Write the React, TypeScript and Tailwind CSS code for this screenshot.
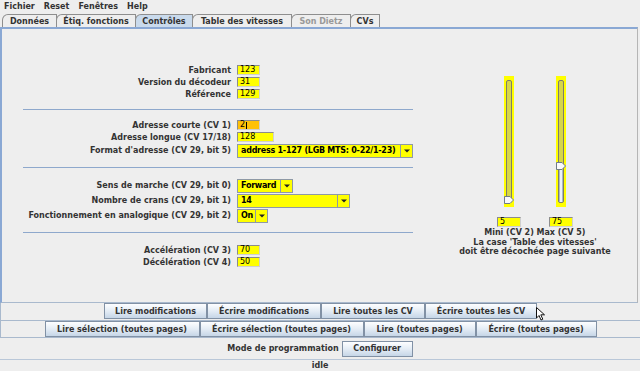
import React from "react";

const menus = ["Fichier", "Reset", "Fenêtres", "Help"];

const tabs = [
  { label: "Données", w: "w-[55px]" },
  { label: "Étiq. fonctions", w: "w-[80px]" },
  { label: "Contrôles", w: "w-[58px]", active: true },
  { label: "Table des vitesses", w: "w-[100px]" },
  { label: "Son Dietz", w: "w-[60px]", disabled: true },
  { label: "CVs", w: "w-[30px]" },
];

const Field = ({ value, w, orange }: { value: string; w: string; orange?: boolean }) => (
  <div
    className={`${w} h-[10px] ${orange ? "bg-[#ffc107]" : "bg-[#ffff00]"} border border-t-[#8c8c8c] border-l-[#8c8c8c] border-r-[#cfcfcf] border-b-[#cfcfcf] pl-[2px] font-normal text-black text-[8px] leading-[8px] flex items-center`}
  >
    {value}
    {orange && <span className="w-px h-[7px] bg-black ml-px" />}
  </div>
);

const Combo = ({ value, w }: { value: string; w: string }) => (
  <div className={`${w} h-[14px] bg-[#ffff00] border border-[#8e99a6] flex text-black`}>
    <div className="flex-1 flex items-center pl-[3px] whitespace-nowrap tracking-[-0.25px]">{value}</div>
    <div className="w-[12px] border-l border-[#8e99a6] flex items-center justify-center">
      <svg width="6" height="4" viewBox="0 0 6 4">
        <path d="M0 0.5h6L3 3.5z" fill="#222" />
      </svg>
    </div>
  </div>
);

const Row = ({ label, h, children }: { label: string; h: string; children: React.ReactNode }) => (
  <div className={`flex items-center ${h}`}>
    <span className="w-[208px] text-right whitespace-nowrap">{label}</span>
    <div className="ml-[6px]">{children}</div>
  </div>
);

const Sep = () => <div className="w-[390px] border-t border-[#8ea8cc]" />;

const Slider = ({ thumb, fill }: { thumb: string; fill?: string }) => (
  <div className="relative w-[10px] h-[131px] bg-[#ffff00]">
    <div className="absolute left-[2px] top-[4px] bottom-[4px] w-[6px] rounded-[2px] border border-[#7d7d6a] bg-[#d6d64a]" />
    {fill && <div className={`absolute left-[3px] w-[4px] ${fill} bg-[#eef3f9] border-x border-[#aab8c8]`} />}
    <svg className={`absolute left-0 ${thumb}`} width="10" height="8" viewBox="0 0 10 8">
      <path d="M0.5 0.5H6L9.5 4L6 7.5H0.5Z" fill="#fafafa" stroke="#6f7b88" />
    </svg>
  </div>
);

const Btn = ({ label, w }: { label: string; w: string }) => (
  <div
    className={`${w} h-[16px] border border-[#8191a5] bg-linear-to-b from-[#fdfeff] via-[#e4ecf5] to-[#c6d6e7] flex items-center justify-center whitespace-nowrap`}
  >
    {label}
  </div>
);

export default function App() {
  return (
    <div className="relative w-[640px] h-[371px] overflow-hidden bg-[#eeeeee] flex flex-col font-['DejaVu_Sans',sans-serif] text-[8px] leading-[9px] font-bold text-[#333333]">
      {/* menu bar */}
      <div className="h-[13px] flex items-center pl-[4px] gap-[9px]">
        {menus.map((m) => (
          <span key={m}>{m}</span>
        ))}
      </div>

      {/* tabs */}
      <div className="h-[14px] flex items-end pl-[2px]">
        {tabs.map((t) => (
          <div
            key={t.label}
            className={`${t.w} h-[13px] border-t border-l border-r border-[#8e8e8e] rounded-tl-[6px] -mr-px flex items-center justify-center whitespace-nowrap ${
              t.active ? "bg-[#c9daec]" : "bg-[#eeeeee]"
            } ${t.disabled ? "text-[#999999]" : ""}`}
          >
            {t.label}
          </div>
        ))}
      </div>

      {/* content panel */}
      <div className="w-[638px] h-[276px] border-t-2 border-l-2 border-[#8aa8d4] border-r border-b border-r-[#b5b5b5] border-b-[#a9b9cd] flex">
        <div className="w-[411px] pl-[21px] flex flex-col">
          <div className="mt-[35px]">
            <Row label="Fabricant" h="h-[12px]">
              <Field value="123" w="w-[23px]" />
            </Row>
            <Row label="Version du décodeur" h="h-[12px]">
              <Field value="31" w="w-[23px]" />
            </Row>
            <Row label="Référence" h="h-[12px]">
              <Field value="129" w="w-[23px]" />
            </Row>
          </div>
          <div className="mt-[9px]">
            <Sep />
          </div>
          <div className="mt-[9px]">
            <Row label="Adresse courte (CV 1)" h="h-[12px]">
              <Field value="2" w="w-[23px]" orange />
            </Row>
            <Row label="Adresse longue (CV 17/18)" h="h-[12px]">
              <Field value="128" w="w-[37px]" />
            </Row>
            <Row label="Format d'adresse (CV 29, bit 5)" h="h-[15px]">
              <Combo value="address 1-127 (LGB MTS: 0-22/1-23)" w="w-[176px]" />
            </Row>
          </div>
          <div className="mt-[9px]">
            <Sep />
          </div>
          <div className="mt-[10px]">
            <Row label="Sens de marche (CV 29, bit 0)" h="h-[15px]">
              <Combo value="Forward" w="w-[56px]" />
            </Row>
            <Row label="Nombre de crans (CV 29, bit 1)" h="h-[15px]">
              <Combo value="14" w="w-[113px]" />
            </Row>
            <Row label="Fonctionnement en analogique (CV 29, bit 2)" h="h-[15px]">
              <Combo value="On" w="w-[31px]" />
            </Row>
          </div>
          <div className="mt-[9px]">
            <Sep />
          </div>
          <div className="mt-[11px]">
            <Row label="Accélération (CV 3)" h="h-[12px]">
              <Field value="70" w="w-[23px]" />
            </Row>
            <Row label="Décélération (CV 4)" h="h-[12px]">
              <Field value="50" w="w-[23px]" />
            </Row>
          </div>
        </div>

        {/* speed sliders */}
        <div className="ml-[42px] w-[160px] mt-[47px] flex flex-col items-center">
          <div className="flex">
            <div className="w-[52px] flex flex-col items-center">
              <Slider thumb="top-[120px]" />
              <div className="mt-[10px]">
                <Field value="5" w="w-[24px]" />
              </div>
              <span className="mt-[1px] whitespace-nowrap">Mini (CV 2)</span>
            </div>
            <div className="w-[52px] flex flex-col items-center">
              <Slider thumb="top-[86px]" fill="top-[94px] h-[32px]" />
              <div className="mt-[10px]">
                <Field value="75" w="w-[24px]" />
              </div>
              <span className="mt-[1px] whitespace-nowrap">Max (CV 5)</span>
            </div>
          </div>
          <span className="mt-px whitespace-nowrap">La case 'Table des vitesses'</span>
          <span className="whitespace-nowrap">doit être décochée page suivante</span>
        </div>
      </div>

      {/* button rows */}
      <div className="h-[18px] border-l border-b border-[#a9b9cd] flex justify-center">
        <Btn label="Lire modifications" w="w-[103px]" />
        <Btn label="Écrire modifications" w="w-[114px]" />
        <Btn label="Lire toutes les CV" w="w-[104px]" />
        <Btn label="Écrire toutes les CV" w="w-[112px]" />
      </div>
      <div className="h-[17px] border-l border-b border-[#a9b9cd] flex justify-center">
        <Btn label="Lire sélection (toutes pages)" w="w-[155px]" />
        <Btn label="Écrire sélection (toutes pages)" w="w-[164px]" />
        <Btn label="Lire (toutes pages)" w="w-[112px]" />
        <Btn label="Écrire (toutes pages)" w="w-[121px]" />
      </div>
      <div className="h-[22px] flex items-center justify-center gap-[3px] border-b border-[#b9c7d8]">
        <span>Mode de programmation</span>
        <Btn label="Configurer" w="w-[71px]" />
      </div>
      <div className="h-[11px] flex items-center justify-center">idle</div>

      {/* mouse pointer */}
      <svg className="absolute left-[536px] top-[307px]" width="10" height="14" viewBox="0 0 10 14">
        <path d="M0.5 0.5V11L3 8.5L5 13L6.8 12.2L4.8 7.8H8.5Z" fill="#ffffff" stroke="#111111" strokeWidth="1" />
      </svg>
    </div>
  );
}
